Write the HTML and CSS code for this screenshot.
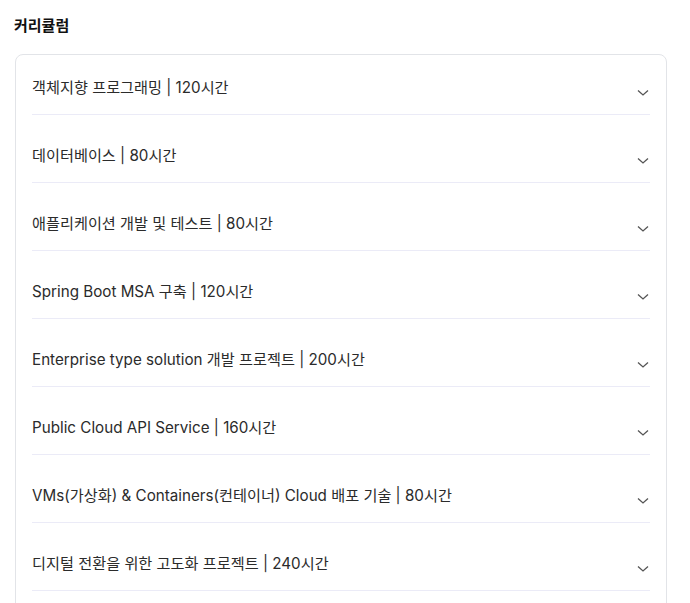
FILE: index.html
```html
<!DOCTYPE html>
<html lang="ko">
<head>
<meta charset="utf-8">
<link rel="stylesheet" href="styles.css">
</head>
<body>
<section class="curriculum">
  <h2 class="title">커리큘럼</h2>
  <div class="card">
    <div class="item"><span class="label">객체지향 프로그래밍 | 120시간</span><svg class="chev" viewBox="0 0 12 8"><path d="M1 1.5 6 6 11 1.5"/></svg></div>
    <div class="item"><span class="label">데이터베이스 | 80시간</span><svg class="chev" viewBox="0 0 12 8"><path d="M1 1.5 6 6 11 1.5"/></svg></div>
    <div class="item"><span class="label">애플리케이션 개발 및 테스트 | 80시간</span><svg class="chev" viewBox="0 0 12 8"><path d="M1 1.5 6 6 11 1.5"/></svg></div>
    <div class="item"><span class="label">Spring Boot MSA 구축 | 120시간</span><svg class="chev" viewBox="0 0 12 8"><path d="M1 1.5 6 6 11 1.5"/></svg></div>
    <div class="item"><span class="label">Enterprise type solution 개발 프로젝트 | 200시간</span><svg class="chev" viewBox="0 0 12 8"><path d="M1 1.5 6 6 11 1.5"/></svg></div>
    <div class="item"><span class="label">Public Cloud API Service | 160시간</span><svg class="chev" viewBox="0 0 12 8"><path d="M1 1.5 6 6 11 1.5"/></svg></div>
    <div class="item"><span class="label">VMs(가상화) &amp; Containers(컨테이너) Cloud 배포 기술 | 80시간</span><svg class="chev" viewBox="0 0 12 8"><path d="M1 1.5 6 6 11 1.5"/></svg></div>
    <div class="item"><span class="label">디지털 전환을 위한 고도화 프로젝트 | 240시간</span><svg class="chev" viewBox="0 0 12 8"><path d="M1 1.5 6 6 11 1.5"/></svg></div>
  </div>
</section>
</body>
</html>
```

FILE: styles.css
```css
* { box-sizing: border-box; }
html, body { margin: 0; padding: 0; background: #fff; }
body {
  font-family: Inter, "Noto Sans CJK KR", sans-serif;
  color: #2b2b2b;
  overflow: hidden;
}
.curriculum {
  padding: 14px 23px 0 15px;
}
.title {
  margin: 0 0 16px -1px;
  font-size: 15px;
  line-height: 24px;
  font-weight: 700;
  color: #111;
}
.card {
  border: 1px solid #e2e4e8;
  border-radius: 8px;
  padding: 0 16px 24px;
  display: flex;
  flex-direction: column;
  gap: 8px;
}
.item {
  display: flex;
  align-items: center;
  justify-content: space-between;
  padding: 21px 0 14px;
  border-bottom: 1px solid #ebebf7;
}
.label {
  font-size: 15.2px;
  line-height: 24px;
}
.chev {
  width: 12px;
  height: 8px;
  margin: 9px 1px 0 0;
  fill: none;
  stroke: #555;
  stroke-width: 1.3;
}
```
